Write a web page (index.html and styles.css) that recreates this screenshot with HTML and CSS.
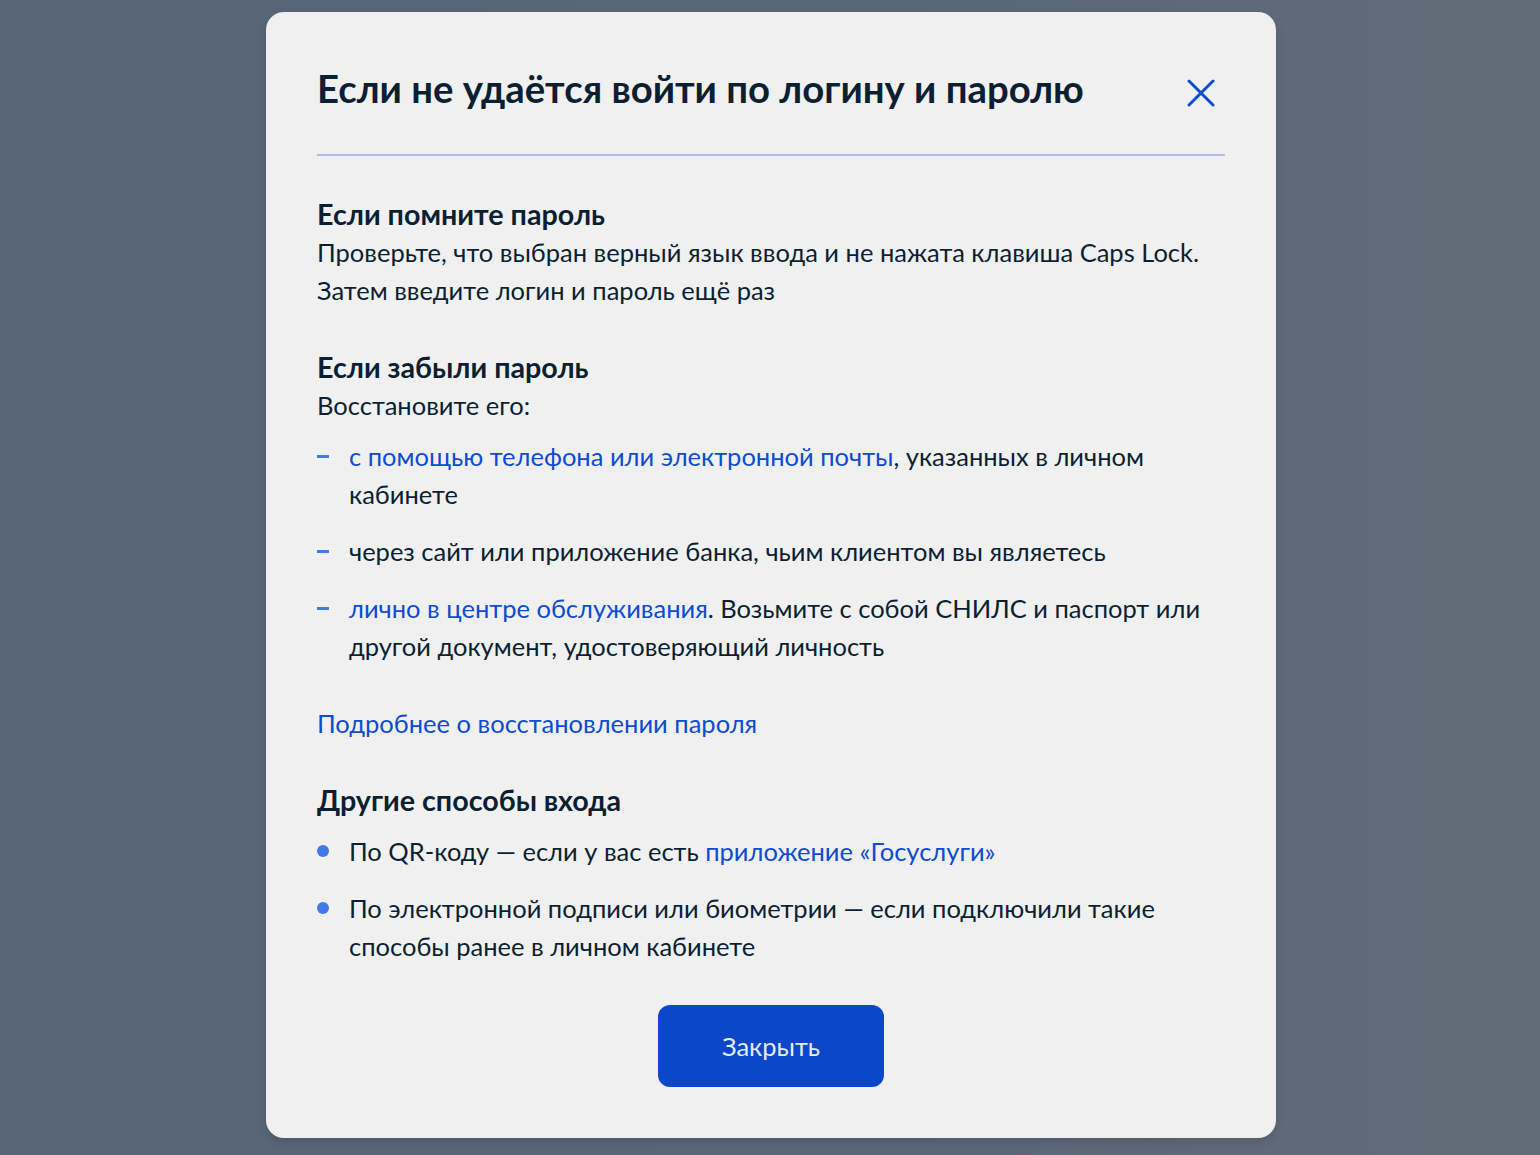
FILE: index.html
```html
<!DOCTYPE html>
<html lang="ru">
<head>
<meta charset="utf-8">
<title>Если не удаётся войти по логину и паролю</title>
<link rel="stylesheet" href="styles.css">
</head>
<body>
<div class="backdrop">
  <div class="modal">
    <div class="modal-head">
      <h1 class="modal-title">Если не удаётся войти по логину и паролю</h1>
      <button class="close" aria-label="Закрыть">
        <svg width="28" height="28" viewBox="0 0 28 28"><path d="M2 2 L26 26 M26 2 L2 26" stroke="#0d4cd3" stroke-width="3" stroke-linecap="round" fill="none"/></svg>
      </button>
    </div>
    <div class="divider"></div>

    <section class="block">
      <h2 class="block-title">Если помните пароль</h2>
      <p class="text">Проверьте, что выбран верный язык ввода и не нажата клавиша Caps Lock. Затем введите логин и пароль ещё раз</p>
    </section>

    <section class="block">
      <h2 class="block-title">Если забыли пароль</h2>
      <p class="text">Восстановите его:</p>
      <ul class="dash-list">
        <li><a href="#" class="link">с помощью телефона или электронной почты</a>, указанных в личном кабинете</li>
        <li>через сайт или приложение банка, чьим клиентом вы являетесь</li>
        <li><a href="#" class="link">лично в центре обслуживания</a>. Возьмите с собой СНИЛС и паспорт или другой документ, удостоверяющий личность</li>
      </ul>
    </section>

    <p class="more"><a href="#" class="link">Подробнее о восстановлении пароля</a></p>

    <section class="block">
      <h2 class="block-title">Другие способы входа</h2>
      <ul class="dot-list">
        <li>По QR-коду — если у вас есть <a href="#" class="link">приложение «Госуслуги»</a></li>
        <li>По электронной подписи или биометрии — если подключили такие способы ранее в личном кабинете</li>
      </ul>
    </section>

    <div class="actions">
      <button class="btn">Закрыть</button>
    </div>
  </div>
</div>
</body>
</html>
```

FILE: styles.css
```css
* { box-sizing: border-box; }
html, body { margin: 0; padding: 0; }
body {
  font-family: Lato, "Noto Sans", sans-serif;
  color: #0b1f33;
  background: #5a6779;
}
.backdrop {
  width: 1540px;
  height: 1155px;
  background: linear-gradient(90deg, #586578 0%, #5a6779 60%, #626c79 100%);
  padding-top: 12px;
  padding-left: 2px;
  display: flex;
  justify-content: center;
}
.modal {
  width: 1010px;
  height: 1126px;
  background: #f0f0f0;
  border-radius: 18px;
  padding: 52px 51px 51px 51px;
  box-shadow: 0 4px 10px rgba(0,0,0,0.12);
}
.modal-head {
  display: flex;
  justify-content: space-between;
  align-items: flex-start;
}
.modal-title {
  margin: 0;
  font-size: 38.3px;
  line-height: 48px;
  font-weight: 700;
  letter-spacing: 0;
}
.close {
  border: 0;
  background: none;
  padding: 0;
  margin: 15px 10px 0 0;
  width: 28px;
  height: 28px;
  cursor: pointer;
}
.close svg { display: block; }
.divider {
  height: 2px;
  background: #aabfe8;
  margin-top: 42px;
}
.block { margin-top: 40px; }
.block-title {
  margin: 0;
  font-size: 28.7px;
  line-height: 36px;
  font-weight: 700;
}
.text {
  margin: 1px 0 0;
  font-size: 25.5px;
  line-height: 38px;
}
.link { color: #0d4cd3; text-decoration: none; }
.dash-list, .dot-list {
  list-style: none;
  margin: 13px 0 0;
  padding: 0;
  font-size: 25.5px;
  line-height: 38px;
  display: flex;
  flex-direction: column;
  gap: 19px;
}
.dot-list { margin-top: 14px; }
.dash-list li, .dot-list li {
  position: relative;
  padding-left: 32px;
}
.dash-list li::before {
  content: "";
  position: absolute;
  left: 0;
  top: 18px;
  width: 12px;
  height: 3px;
  background: #3f7ae8;
}
.dot-list li::before {
  content: "";
  position: absolute;
  left: 0;
  top: 13px;
  width: 12px;
  height: 12px;
  border-radius: 50%;
  background: #3f7ae8;
}
.more {
  margin: 39px 0 0;
  font-size: 25.5px;
  line-height: 38px;
}
.actions {
  display: flex;
  justify-content: center;
  margin-top: 40px;
}
.btn {
  width: 226px;
  height: 82px;
  border: 0;
  border-radius: 12px;
  background: #0d47c9;
  color: #e4ebf8;
  font-family: Lato, "Noto Sans", sans-serif;
  font-size: 25.5px;
  cursor: pointer;
}
```
